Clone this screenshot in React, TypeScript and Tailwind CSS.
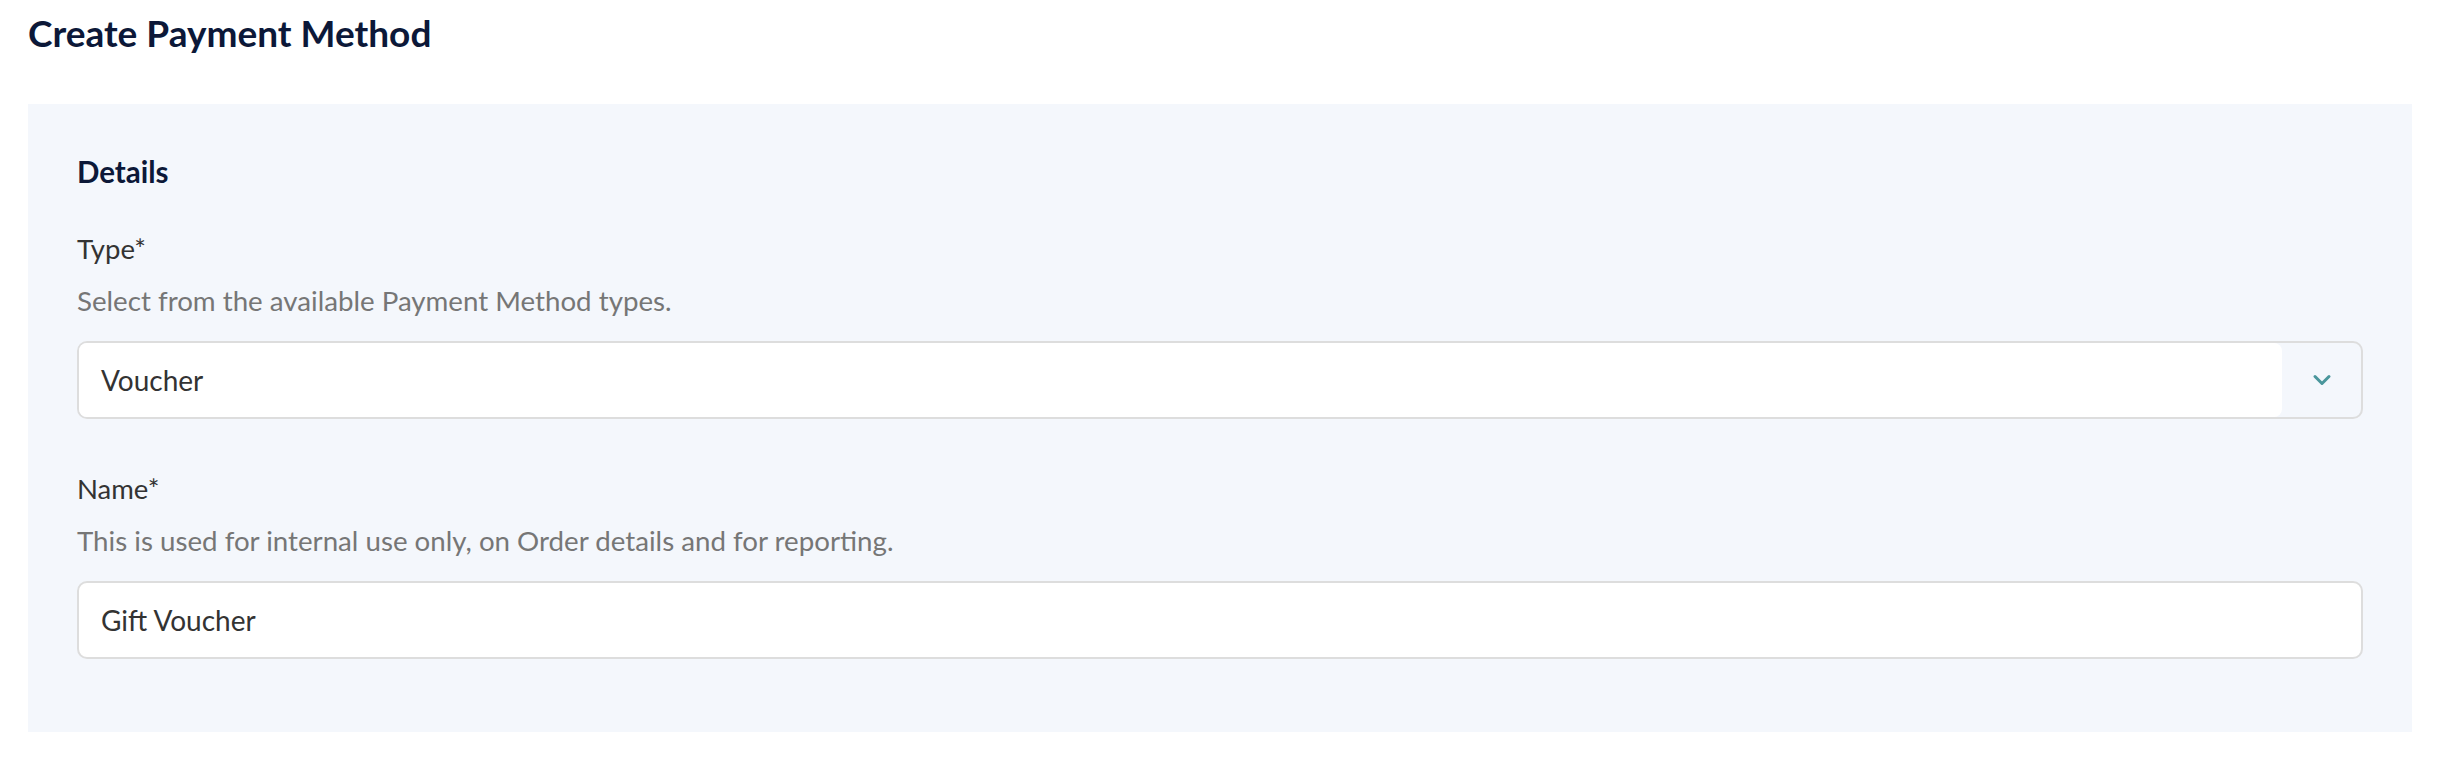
import { ChevronDown } from "lucide-react";

export default function App() {
  return (
    <div className="min-h-screen bg-white font-['Lato','Noto_Sans',sans-serif] px-[28px] pt-[12px]">
      <h1 className="text-[37px] leading-[42px] font-bold text-[#0c1838]">
        Create Payment Method
      </h1>

      {/* Details panel */}
      <div className="mt-[50px] bg-[#f4f7fc] px-[49px] pt-[48px] pb-[73px]">
        <h2 className="text-[29.5px] leading-[40px] font-bold text-[#0c1838]">Details</h2>

        <div className="mt-[37px]">
          <label className="block text-[27.5px] leading-[40px] text-[#333333]">Type*</label>
          <p className="mt-[12px] text-[27.7px] leading-[40px] text-[#767676]">
            Select from the available Payment Method types.
          </p>
          <div className="mt-[20px] flex h-[78px] rounded-[10px] border-2 border-[#dddddd] bg-[#f4f7fc]">
            <div className="flex flex-1 items-center rounded-[8px] bg-white pl-[22px] text-[28px] text-[#333333]">
              Voucher
            </div>
            <div className="flex w-[79px] items-center justify-center">
              <ChevronDown size={28} strokeWidth={2.6} className="text-[#4a969c]" />
            </div>
          </div>
        </div>

        <div className="mt-[50px]">
          <label className="block text-[27.5px] leading-[40px] text-[#333333]">Name*</label>
          <p className="mt-[12px] text-[27.7px] leading-[40px] text-[#767676]">
            This is used for internal use only, on Order details and for reporting.
          </p>
          <div className="mt-[20px] flex h-[78px] items-center rounded-[10px] border-2 border-[#dddddd] bg-white pl-[22px] text-[28px] text-[#333333]">
            Gift Voucher
          </div>
        </div>
      </div>
    </div>
  );
}
